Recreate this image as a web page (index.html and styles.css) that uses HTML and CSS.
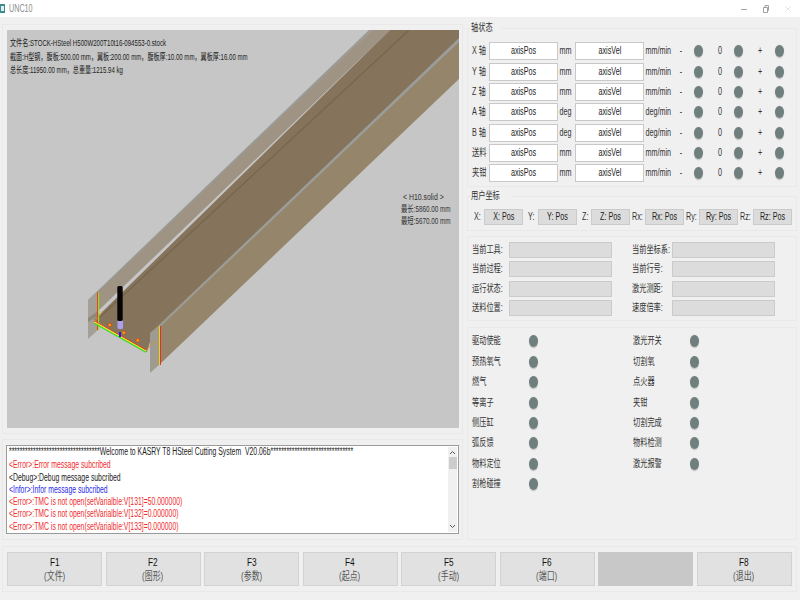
FILE: index.html
```html
<!DOCTYPE html>
<html lang="zh">
<head>
<meta charset="utf-8">
<title>UNC10</title>
<link rel="stylesheet" href="styles.css">
</head>
<body>
<div class="app">
  <header class="titlebar">
    <svg class="app-icon" width="5" height="9" viewBox="0 0 5 9"><rect width="5" height="9" fill="#3d8a8f"/><rect x="1" y="2" width="3" height="5" fill="#dfeeee"/></svg>
    <span class="title-text sq">UNC10</span>
    <div class="win-controls">
      <svg width="8" height="8" viewBox="0 0 8 8"><path d="M1 4.5H7" stroke="#a8a8a8"/></svg>
      <svg width="8" height="8" viewBox="0 0 8 8"><path d="M1.5 2.5H5.5V7.5H1.5ZM3 2.5V.5H6.5V5.5H5.5" fill="none" stroke="#8a8a8a" stroke-width=".8"/></svg>
      <svg width="8" height="8" viewBox="0 0 8 8"><path d="M1 1L7 7M7 1L1 7" stroke="#e6e6e6"/></svg>
    </div>
  </header>

  <main class="workspace">
    <section class="left-col">
      <div class="frame view-frame">
        <div class="viewport">
          <svg class="scene" viewBox="7 30 452 398" width="452" height="398">
            <polygon points="369,30 372,30 91,302 88,300" fill="#9a9a96"/>
            <polygon points="372,30 390,30 98,311 98,292 91,299" fill="#9f9383"/>
            <polygon points="88,300 98,291 98,330 88,339" fill="#a4a098"/>
            <polygon points="94,320 390,30 459,30 459,40 152,335 147,352" fill="#85745b"/>
            <polygon points="88,318 98,311 98,316 88,322" fill="#8f8778"/>
            <path d="M100 317L409 30" stroke="#75654c" stroke-width="1.2" fill="none"/>
            <polygon points="150,333 459,39 459,79 160,364 160,325" fill="#95856b"/>
            <polygon points="150,334 459,38 459,42 160,327" fill="#9b9d9a"/>
            <polygon points="150,333 160,325 160,364 150,373" fill="#a09b90"/>
            <path d="M97.500 292V330" stroke="#e03a1a" stroke-width="1"/>
            <path d="M98.500 292V330" stroke="#a7d41e" stroke-width="1.200"/>
            <path d="M159.500 326V365" stroke="#f3d21a" stroke-width="1"/>
            <path d="M160.500 326V365" stroke="#e0331a" stroke-width="1"/>
            <path d="M94.300 321L146 350" stroke="#ef2a18" stroke-width="1" fill="none"/>
            <path d="M94.300 322L146 351" stroke="#f6ee1e" stroke-width="1.200" fill="none"/>
            <path d="M94.300 323.200L146 352.200" stroke="#33dd22" stroke-width="1.200" fill="none"/>
            <path d="M94.300 321.700L101.700 313.300L102.500 311" stroke="#d9962a" stroke-width=".9" fill="none"/>
            <path d="M146 351L151.700 344L157.300 341.700" stroke="#c7953a" stroke-width=".9" fill="none"/>
            <circle cx="109.700" cy="325" r="1.700" fill="#e8b01c" stroke="#e0481a"/>
            <circle cx="123.700" cy="332.700" r="1.700" fill="#e8b01c" stroke="#e0481a"/>
            <circle cx="137.700" cy="340.300" r="1.700" fill="#e8b01c" stroke="#e0481a"/>
            <rect x="119" y="332" width="2" height="5" fill="#2020d8"/>
            <rect x="117.500" y="319" width="5.500" height="10" rx="1.500" fill="#ab9ff0"/>
            <rect x="117.300" y="286" width="5.400" height="35" rx="1.500" fill="#050505"/>
          </svg>
          <div class="stock-info">
            <p class="sq">文件名:STOCK-HSteel H500W200T10t16-094553-0.stock</p>
            <p class="sq">截面:H型钢，腹板:500.00 mm，翼板:200.00 mm，腹板厚:10.00 mm，翼板厚:16.00 mm</p>
            <p class="sq">总长度:11950.00 mm，总重量:1215.94 kg</p>
          </div>
          <div class="solid-info">
            <p class="sq solid-name">&lt; H10.solid &gt;</p>
            <p class="sq">最长:5860.00 mm</p>
            <p class="sq">最短:5670.00 mm</p>
          </div>
        </div>
      </div>
      <div class="frame log-frame">
        <div class="log">
          <div class="log-lines">
            <p class="sq black">**********************************Welcome to KASRY T8 HSteel Cutting System&nbsp; V20.06b*******************************</p>
            <p class="sq red">&lt;Error&gt;:Error message subcribed</p>
            <p class="sq black">&lt;Debug&gt;:Debug message subcribed</p>
            <p class="sq blue">&lt;Infor&gt;:Infor message subcribed</p>
            <p class="sq red">&lt;Error&gt;:TMC is not open(setVarialble:V[131]=50.000000)</p>
            <p class="sq red">&lt;Error&gt;:TMC is not open(setVarialble:V[132]=0.000000)</p>
            <p class="sq red">&lt;Error&gt;:TMC is not open(setVarialble:V[133]=0.000000)</p>
          </div>
          <div class="scrollbar">
            <svg width="7" height="5" viewBox="0 0 7 5"><path d="M1 4L3.500 1.500L6 4" fill="none" stroke="#555"/></svg>
            <div class="thumb"></div>
            <svg class="arrow-down" width="7" height="5" viewBox="0 0 7 5"><path d="M1 1L3.500 3.500L6 1" fill="none" stroke="#555"/></svg>
          </div>
        </div>
      </div>
    </section>

    <section class="right-col">
      <fieldset class="group axis-group">
        <legend class="sq">轴状态</legend>
        <div class="axis-row">
          <span class="lbl sq">X 轴</span><span class="box"><span class="sqc">axisPos</span></span><span class="lbl unit sq">mm</span><span class="box"><span class="sqc">axisVel</span></span><span class="lbl unit sq">mm/min</span>
          <span class="mark minus sqc">-</span><i class="led"></i><span class="mark zero sqc">0</span><i class="led"></i><span class="mark plus sqc">+</span><i class="led"></i>
        </div>
        <div class="axis-row">
          <span class="lbl sq">Y 轴</span><span class="box"><span class="sqc">axisPos</span></span><span class="lbl unit sq">mm</span><span class="box"><span class="sqc">axisVel</span></span><span class="lbl unit sq">mm/min</span>
          <span class="mark minus sqc">-</span><i class="led"></i><span class="mark zero sqc">0</span><i class="led"></i><span class="mark plus sqc">+</span><i class="led"></i>
        </div>
        <div class="axis-row">
          <span class="lbl sq">Z 轴</span><span class="box"><span class="sqc">axisPos</span></span><span class="lbl unit sq">mm</span><span class="box"><span class="sqc">axisVel</span></span><span class="lbl unit sq">mm/min</span>
          <span class="mark minus sqc">-</span><i class="led"></i><span class="mark zero sqc">0</span><i class="led"></i><span class="mark plus sqc">+</span><i class="led"></i>
        </div>
        <div class="axis-row">
          <span class="lbl sq">A 轴</span><span class="box"><span class="sqc">axisPos</span></span><span class="lbl unit sq">deg</span><span class="box"><span class="sqc">axisVel</span></span><span class="lbl unit sq">deg/min</span>
          <span class="mark minus sqc">-</span><i class="led"></i><span class="mark zero sqc">0</span><i class="led"></i><span class="mark plus sqc">+</span><i class="led"></i>
        </div>
        <div class="axis-row">
          <span class="lbl sq">B 轴</span><span class="box"><span class="sqc">axisPos</span></span><span class="lbl unit sq">deg</span><span class="box"><span class="sqc">axisVel</span></span><span class="lbl unit sq">deg/min</span>
          <span class="mark minus sqc">-</span><i class="led"></i><span class="mark zero sqc">0</span><i class="led"></i><span class="mark plus sqc">+</span><i class="led"></i>
        </div>
        <div class="axis-row">
          <span class="lbl sq">送料</span><span class="box"><span class="sqc">axisPos</span></span><span class="lbl unit sq">mm</span><span class="box"><span class="sqc">axisVel</span></span><span class="lbl unit sq">mm/min</span>
          <span class="mark minus sqc">-</span><i class="led"></i><span class="mark zero sqc">0</span><i class="led"></i><span class="mark plus sqc">+</span><i class="led"></i>
        </div>
        <div class="axis-row">
          <span class="lbl sq">夹钳</span><span class="box"><span class="sqc">axisPos</span></span><span class="lbl unit sq">mm</span><span class="box"><span class="sqc">axisVel</span></span><span class="lbl unit sq">mm/min</span>
          <span class="mark minus sqc">-</span><i class="led"></i><span class="mark zero sqc">0</span><i class="led"></i><span class="mark plus sqc">+</span><i class="led"></i>
        </div>
      </fieldset>

      <fieldset class="group coord-group">
        <legend class="sq">用户坐标</legend>
        <div class="coord-row">
          <div class="coord-item"><span class="lbl sq">X:</span><span class="box grey"><span class="sqc">X: Pos</span></span></div>
          <div class="coord-item"><span class="lbl sq">Y:</span><span class="box grey"><span class="sqc">Y: Pos</span></span></div>
          <div class="coord-item coord-z"><span class="lbl sq">Z:</span><span class="box grey"><span class="sqc">Z: Pos</span></span></div>
          <div class="coord-item coord-r"><span class="lbl sq">Rx:</span><span class="box grey"><span class="sqc">Rx: Pos</span></span></div>
          <div class="coord-item coord-r"><span class="lbl sq">Ry:</span><span class="box grey"><span class="sqc">Ry: Pos</span></span></div>
          <div class="coord-item coord-r"><span class="lbl sq">Rz:</span><span class="box grey"><span class="sqc">Rz: Pos</span></span></div>
        </div>
      </fieldset>

      <div class="panel info-panel">
        <span class="lbl sq">当前工具:</span><span class="box grey"></span><span class="lbl sq col2">当前坐标系:</span><span class="box grey"></span>
        <span class="lbl sq">当前过程:</span><span class="box grey"></span><span class="lbl sq col2">当前行号:</span><span class="box grey"></span>
        <span class="lbl sq">运行状态:</span><span class="box grey"></span><span class="lbl sq col2">激光测距:</span><span class="box grey"></span>
        <span class="lbl sq">送料位置:</span><span class="box grey"></span><span class="lbl sq col2">速度倍率:</span><span class="box grey"></span>
      </div>

      <div class="panel io-panel">
        <span class="lbl sq">驱动使能</span><i class="led"></i><span class="lbl sq col2">激光开关</span><i class="led"></i>
        <span class="lbl sq">预热氧气</span><i class="led"></i><span class="lbl sq col2">切割氧</span><i class="led"></i>
        <span class="lbl sq">燃气</span><i class="led"></i><span class="lbl sq col2">点火器</span><i class="led"></i>
        <span class="lbl sq">等离子</span><i class="led"></i><span class="lbl sq col2">夹钳</span><i class="led"></i>
        <span class="lbl sq">侧压缸</span><i class="led"></i><span class="lbl sq col2">切割完成</span><i class="led"></i>
        <span class="lbl sq">弧反馈</span><i class="led"></i><span class="lbl sq col2">物料检测</span><i class="led"></i>
        <span class="lbl sq">物料定位</span><i class="led"></i><span class="lbl sq col2">激光报警</span><i class="led"></i>
        <span class="lbl sq">割枪碰撞</span><i class="led"></i>
      </div>
    </section>
  </main>

  <footer class="fkeys">
    <button class="fkey"><b class="sqc">F1</b><span class="sqc">(文件)</span></button>
    <button class="fkey"><b class="sqc">F2</b><span class="sqc">(图形)</span></button>
    <button class="fkey"><b class="sqc">F3</b><span class="sqc">(参数)</span></button>
    <button class="fkey"><b class="sqc">F4</b><span class="sqc">(起点)</span></button>
    <button class="fkey"><b class="sqc">F5</b><span class="sqc">(手动)</span></button>
    <button class="fkey"><b class="sqc">F6</b><span class="sqc">(端口)</span></button>
    <button class="fkey blank"></button>
    <button class="fkey"><b class="sqc">F8</b><span class="sqc">(退出)</span></button>
  </footer>
</div>
</body>
</html>
```
FILE: styles.css
```css
* { box-sizing: border-box; }
html, body { margin: 0; padding: 0; }
body {
  width: 800px;
  height: 600px;
  overflow: hidden;
  background: #f0f0f0;
  color: #222;
  font: 10px/12px "Liberation Sans", "Noto Sans CJK SC", sans-serif;
}
p { margin: 0; }
.app { width: 800px; height: 600px; display: flex; flex-direction: column; }

/* Horizontally condensed text, as in the reference */
.sq, .sqc { display: inline-block; white-space: nowrap; transform: scaleX(.72); }
.sq { transform-origin: left center; }
.sqc { transform-origin: center; }

/* Title bar */
.titlebar {
  height: 17px;
  flex: none;
  background: #fff;
  display: flex;
  align-items: center;
}
.app-icon { margin-right: 4px; }
.title-text { color: #8b8b8b; font-size: 10px; }
.win-controls { margin-left: auto; display: flex; gap: 14px; padding-right: 8px; }

/* Main area */
.workspace {
  display: flex;
  gap: 4px;
  padding: 7px 3px 0 2px;
  height: 523px;
  flex: none;
}
.left-col { width: 461px; flex: none; display: flex; flex-direction: column; gap: 5px; }
.right-col { width: 330px; flex: none; display: flex; flex-direction: column; }
.frame { border: 1px solid #e9e9e9; padding: 5px 3px 5px 4px; }
.view-frame { height: 410px; }
.log-frame { height: 101px; padding-left: 3px; }

/* 3D viewport */
.viewport { position: relative; width: 452px; height: 398px; background: #c6c6c6; overflow: hidden; }
.scene { display: block; }
.stock-info { position: absolute; left: 3px; top: 6px; color: #222; }
.stock-info p { display: block; height: 13.6px; line-height: 13.6px; font-size: 9.6px; transform: scaleX(.635); }
.solid-info { position: absolute; left: 394px; top: 161px; color: #333; }
.solid-info p { display: block; height: 11.8px; line-height: 11.8px; font-size: 9.6px; transform: scaleX(.66); }
.solid-info .solid-name { margin-left: 2px; transform: scaleX(.72); }

/* Log */
.log { height: 89px; width: 453px; background: #fff; border: 1px solid #9b9b9b; display: flex; }
.log-lines { flex: 1; padding: 0 0 0 2px; overflow: hidden; }
.log-lines p { display: block; height: 12.25px; line-height: 12.25px; transform: scaleX(.685); }
.log-lines p:first-child { margin-bottom: 1px; }
.black { color: #222; }
.red { color: #f02c2c; }
.blue { color: #2a2ae8; }
.scrollbar { width: 9px; margin: 1px 1px 1px 0; background: #f0f0f0; display: flex; flex-direction: column; align-items: center; padding-top: 3px; }
.thumb { width: 8px; height: 12px; margin-top: 2px; background: #cdcdcd; }
.arrow-down { margin-top: auto; margin-bottom: 3px; }

/* Right column panels */
.group { margin: 0; min-width: 0; border: 1px solid #e9e9e9; padding: 0; }
.group legend { padding: 0; height: 10px; line-height: 10px; color: #333; }
.panel { border: 1px solid #e9e9e9; }
.lbl { color: #333; }

.axis-group { height: 164px; margin-top: -1px; padding: 8px 0 0 4px; }
.axis-group legend { margin-left: -1px; }
.axis-row {
  display: grid;
  grid-template-columns: 17px 69px 17px 69px 33px 16px 10px 30px 10px 31px 10px;
  align-items: center;
  height: 20.35px;
}
.unit { padding-left: 2px; }
.mark { text-align: center; color: #333; }
.minus { margin-right: 8px; }
.zero { margin-left: 4px; }
.plus { margin-left: 3px; }

.box {
  display: flex;
  align-items: center;
  justify-content: center;
  height: 18px;
  background: #fff;
  border: 1px solid #c9c9c9;
}
.box.grey { background: #dcdcdc; border-color: #cbcbcb; height: 16px; }

.led {
  display: block;
  justify-self: center;
  width: 9px;
  height: 12px;
  border-radius: 50%;
  background: #6f7f7e;
  box-shadow: 0 1.5px 0 #cfcfcf, 0 0 1px #bbb;
}

.coord-group { height: 40px; margin-top: 4px; padding: 8px 0 0 6px; }
.coord-group legend { margin-left: -3px; }
.coord-row { display: flex; align-items: center; }
.coord-item { flex: none; margin-right: 5px; display: grid; grid-template-columns: 10px 39px; align-items: center; }
.coord-z { grid-template-columns: 9px 39px; margin-right: 2px; }
.coord-r { grid-template-columns: 13px 39px; margin-right: 2px; }

.info-panel {
  height: 85px;
  margin-top: 5px;
  padding: 5px 0 0 4px;
  display: grid;
  grid-template-columns: 37px 103px 60px 103px;
  grid-auto-rows: 16px;
  row-gap: 3.3px;
  align-items: center;
}
.info-panel .col2 { margin-left: 20px; }

.io-panel {
  height: 213px;
  margin-top: 6px;
  padding: 3.3px 0 0 4px;
  display: grid;
  grid-template-columns: 56px 10px 151px 10px;
  grid-auto-rows: 20.35px;
  align-items: center;
}
.io-panel .col2 { margin-left: 95px; }

/* Function keys */
.fkeys {
  margin: 6px 3px 0 2px;
  height: 46px;
  flex: none;
  border: 1px solid #e9e9e9;
  padding: 5px 4px 5px 4px;
  display: grid;
  grid-template-columns: repeat(8, 95px);
  column-gap: 3.5px;
}
.fkey {
  margin: 0;
  padding: 0;
  height: 34px;
  background: #e1e1e1;
  border: 1px solid #d2d2d2;
  display: flex;
  flex-direction: column;
  align-items: center;
  justify-content: center;
  font: inherit;
  color: #222;
}
.fkey b { font-weight: normal; font-size: 11.500px; line-height: 14px; color: #111; }
.fkey span { font-size: 11px; line-height: 14px; color: #555; }
.fkey.blank { background: #c8c8c8; border-color: #c8c8c8; }
```
